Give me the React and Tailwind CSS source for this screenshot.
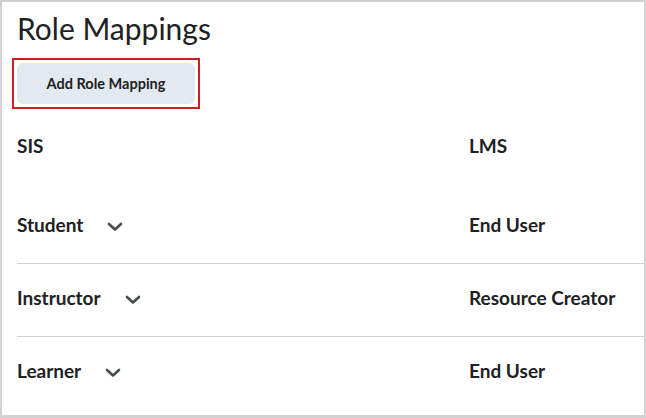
import React from "react";

const rows = [
  { sis: "Student", lms: "End User" },
  { sis: "Instructor", lms: "Resource Creator" },
  { sis: "Learner", lms: "End User" },
];

function Chevron() {
  return (
    <svg width="16" height="10" viewBox="0 0 16 10" className="ml-[24px] mt-[3px]">
      <polyline
        points="2,2 8,7.5 14,2"
        fill="none"
        stroke="#494c4e"
        strokeWidth="2.6"
        strokeLinecap="round"
        strokeLinejoin="round"
      />
    </svg>
  );
}

export default function App() {
  return (
    <div className="w-[646px] h-[418px] bg-white border-2 border-b-[3px] border-[#d2d2d2] font-['Lato',sans-serif] text-[#202122] overflow-hidden">
      <div className="pl-[15px]">
        <h1 className="mt-[8px] text-[30px] leading-[36px] font-normal">Role Mappings</h1>

        <div className="mt-[12px] ml-[-5px] w-fit border-2 border-[#cd1f1f] p-[3px]">
          <button className="w-[178px] h-[41px] rounded-md bg-[#e3e9f1] text-[14.5px] font-bold text-[#202122]">
            Add Role Mapping
          </button>
        </div>

        <div className="mt-[25px] grid grid-cols-[452px_1fr] text-[19px] leading-[24px] font-bold">
          <div>SIS</div>
          <div>LMS</div>
        </div>

        <div className="mt-[33px]">
          {rows.map((r, i) => (
            <div
              key={r.sis}
              className={
                "grid grid-cols-[452px_1fr] pt-[22px] pb-[26px] text-[19px] leading-[24px] font-bold " +
                (i < rows.length - 1 ? "border-b border-[#cdd5dc]" : "")
              }
            >
              <div className="flex items-center">
                <span>{r.sis}</span>
                <Chevron />
              </div>
              <div>{r.lms}</div>
            </div>
          ))}
        </div>
      </div>
    </div>
  );
}
